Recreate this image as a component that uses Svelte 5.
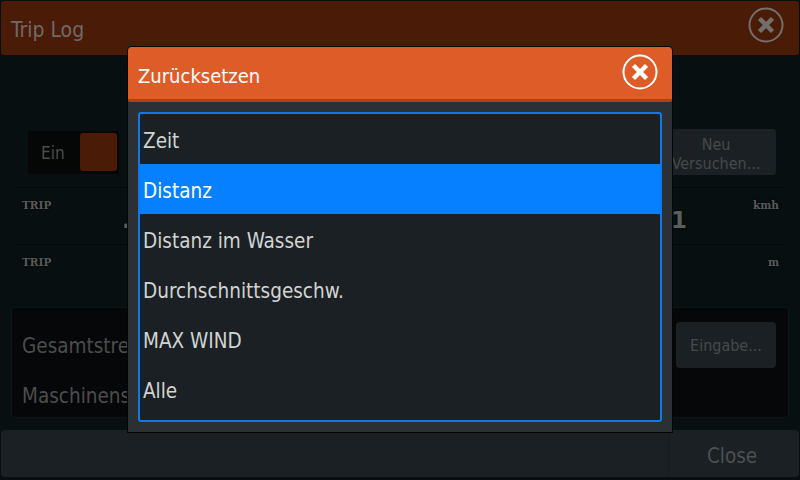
<script>
	const items = ['Zeit', 'Distanz', 'Distanz im Wasser', 'Durchschnittsgeschw.', 'MAX WIND', 'Alle'];
	let selected = $state(1);
</script>

{#snippet closeIcon()}
	<svg class="close-icon" viewBox="0 0 36 36" width="36" height="36">
		<circle cx="18" cy="18" r="16.5" fill="none" stroke="currentColor" stroke-width="2" />
		<path d="M11.5 11.5 24.5 24.5 M24.5 11.5 11.5 24.5" fill="none" stroke="currentColor" stroke-width="4.5" />
	</svg>
{/snippet}

<div class="page">
	<header class="topbar">
		<span class="top-title">Trip Log</span>
		<span class="top-close">{@render closeIcon()}</span>
	</header>

	<main class="content">
		<div class="controls">
			<div class="toggle">
				<span>Ein</span>
				<i></i>
			</div>
			<button class="ghost retry">Neu<br />Versuchen...</button>
		</div>

		<div class="trip-row first">
			<span>TRIP</span>
			<b class="dot">.</b>
			<b class="val">1</b>
			<span>kmh</span>
		</div>
		<div class="trip-row second">
			<span>TRIP</span>
			<span>m</span>
		</div>

		<section class="totals">
			<div class="labels">
				<div>Gesamtstrecke</div>
				<div>Maschinenstunden</div>
			</div>
			<button class="ghost enter">Eingabe...</button>
		</section>
	</main>

	<footer class="bottombar">
		<button class="footer-close">Close</button>
	</footer>
</div>

<div class="dialog">
	<div class="dialog-head">
		<span class="dialog-title">Zurücksetzen</span>
		<span class="dialog-close">{@render closeIcon()}</span>
	</div>
	<div class="dialog-body">
		<ul class="list">
			{#each items as item, i}
				<li class:active={i === selected}>
					<button onclick={() => (selected = i)}>{item}</button>
				</li>
			{/each}
		</ul>
	</div>
</div>

<style>
	:global(body) {
		margin: 0;
		background: #080f10;
	}
	.page {
		width: 800px;
		height: 480px;
		overflow: hidden;
		display: flex;
		flex-direction: column;
		font-family: 'DejaVu Sans', sans-serif;
		font-stretch: condensed;
		color: #4b4d4d;
		background: #080f10;
	}
	button {
		font: inherit;
		border: 0;
		padding: 0;
		cursor: pointer;
	}
	.topbar {
		height: 54px;
		margin: 1px 1px 0;
		padding: 0 15px 0 10px;
		flex: none;
		display: flex;
		align-items: center;
		justify-content: space-between;
		background: #4a1b07;
		border-radius: 3px;
		font-size: 21px;
		color: #6f6a67;
	}
	.top-title {
		margin-top: 3px;
	}
	.top-close {
		display: flex;
		margin-top: -6px;
		color: #736f6b;
	}
	.close-icon {
		display: block;
	}
	.content {
		flex: 1;
		padding: 74px 11px 0;
		display: flex;
		flex-direction: column;
	}
	.controls {
		display: flex;
		justify-content: space-between;
		align-items: center;
		height: 46px;
		padding: 0 13px 0 17px;
	}
	.toggle {
		width: 91px;
		height: 43px;
		box-sizing: border-box;
		padding: 3px 2px;
		display: flex;
		align-items: center;
		justify-content: space-between;
		background: #050606;
		border-radius: 3px;
		font-size: 17px;
		color: #4b4d4d;
	}
	.toggle span {
		padding: 2px 0 0 11px;
	}
	.toggle i {
		width: 37px;
		height: 38px;
		background: #4a1b07;
		border-radius: 3px;
	}
	.ghost {
		background: #1a2023;
		color: #464a4c;
		border-radius: 4px;
		font-size: 16px;
		line-height: 19px;
	}
	.retry {
		width: 120px;
		height: 46px;
		padding-top: 4px;
	}
	.trip-row {
		height: 57px;
		box-sizing: border-box;
		margin: 0 6px;
		padding: 11px 4px 0 5px;
		display: flex;
		justify-content: space-between;
		align-items: flex-start;
		position: relative;
		font: 10.5px 'DejaVu Serif', serif;
		font-weight: 600;
		color: #585a5a;
		text-shadow: 0 0 2px #000;
		border-top: 1px solid #050808;
	}
	.trip-row.first {
		margin-top: 12px;
	}
	.trip-row.second {
		height: 63px;
	}
	.dot,
	.val {
		position: absolute;
		font: bold 23px 'DejaVu Sans', sans-serif;
		color: #5c5e5e;
		top: 19px;
	}
	.dot {
		left: 105px;
	}
	.val {
		left: 654px;
	}
	.totals {
		height: 111px;
		box-sizing: border-box;
		padding: 13px 12px 0 10px;
		display: flex;
		justify-content: space-between;
		align-items: flex-start;
		background: #060708;
		border: 1px solid #0d1517;
		border-radius: 3px;
	}
	.labels {
		font-size: 20.5px;
		line-height: 50px;
		color: #4b4d4d;
	}
	.enter {
		width: 100px;
		height: 46px;
		margin-top: 1px;
	}
	.bottombar {
		height: 47px;
		flex: none;
		margin: 0 1px 3px;
		display: flex;
		justify-content: flex-end;
		background: #1a2023;
		border-radius: 4px;
	}
	.footer-close {
		width: 131px;
		background: transparent;
		border-left: 1px solid #161b1e;
		color: #4c5052;
		font-size: 20.5px;
		padding: 4px 4px 0 0;
	}
	.dialog {
		position: absolute;
		left: 128px;
		top: 47px;
		width: 544px;
		height: 385px;
		display: flex;
		flex-direction: column;
		background: #2a3033;
		border-radius: 4px 4px 0 0;
		box-shadow: 0 0 0 1px #050505;
		font-family: 'DejaVu Sans', sans-serif;
		font-stretch: condensed;
	}
	.dialog-head {
		height: 55px;
		flex: none;
		box-sizing: border-box;
		padding: 0 14px 4px 10px;
		display: flex;
		align-items: center;
		justify-content: space-between;
		background: #de5c28;
		border-bottom: 3px solid #a8441d;
		border-radius: 4px 4px 2px 2px;
		color: #fff;
		font-size: 20px;
	}
	.dialog-title {
		margin-top: 10px;
	}
	.dialog-close {
		display: flex;
		margin-top: 2px;
	}
	.dialog-body {
		flex: 1;
		padding: 10px 10px 10px;
		display: flex;
	}
	.list {
		flex: 1;
		list-style: none;
		margin: 0;
		padding: 0;
		box-sizing: border-box;
		background: #1a2023;
		border: 2px solid #0f79e6;
		border-radius: 3px;
		overflow: hidden;
	}
	.list li {
		height: 50px;
	}
	.list button {
		width: 100%;
		height: 100%;
		padding: 3px 3px 0 3px;
		text-align: left;
		background: transparent;
		color: #d2d4d4;
		font-size: 20.5px;
	}
	.list li.active button {
		background: #0680fe;
		color: #fff;
	}
</style>
